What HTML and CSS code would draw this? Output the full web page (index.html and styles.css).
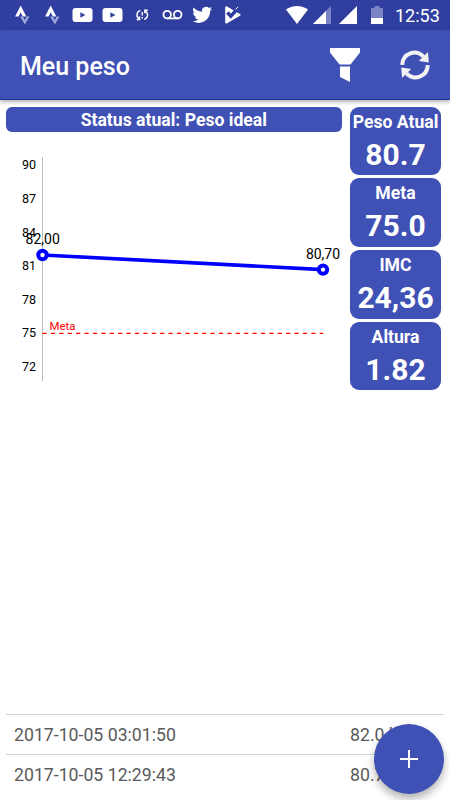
FILE: index.html
```html
<!DOCTYPE html>
<html lang="pt-BR">
<head>
    <meta charset="UTF-8">
    <meta name="viewport" content="width=device-width, initial-scale=1.0">
    <title>Meu peso</title>
    <link rel="stylesheet" href="styles.css">
</head>
<body>
    <div class="status-bar">
        <div class="notifications">
            <svg viewBox="0 0 30 30"><path fill="#fff" d="M13.7 5.6l5.6 11h-3.5l-2.1-4.1-2.1 4.1H8.1z"/><path fill="#9fa8da" d="M13.1 16.6h2.7l2.1 3.4 1.8-3.4h2.8L17.9 24.4z"/></svg>
            <svg viewBox="0 0 30 30"><path fill="#fff" d="M13.7 5.6l5.6 11h-3.5l-2.1-4.1-2.1 4.1H8.1z"/><path fill="#9fa8da" d="M13.1 16.6h2.7l2.1 3.4 1.8-3.4h2.8L17.9 24.4z"/></svg>
            <svg viewBox="0 0 30 30"><rect x="5.5" y="8" width="20" height="14" rx="3" fill="#fff"/><path fill="#303f9f" d="M13.4 12.2v5.6l5-2.8z"/></svg>
            <svg viewBox="0 0 30 30"><rect x="5.5" y="8" width="20" height="14" rx="3" fill="#fff"/><path fill="#303f9f" d="M13.4 12.2v5.6l5-2.8z"/></svg>
            <svg viewBox="0 0 30 30" fill="none" stroke="#fff" stroke-width="1.4"><path d="M13.4 10.4c-3.8 1.2-4.6 6-1.6 8.4M9.6 19.6h3v-3M17.2 19.4c3.8-1.2 4.4-6 1.4-8.2M20.8 10.2h-3v3M15.3 12v3.6M15.3 17v1.5"/></svg>
            <svg viewBox="0 0 30 30" fill="none" stroke="#fff" stroke-width="1.8"><circle cx="10.2" cy="14.6" r="3.8"/><circle cx="20.7" cy="14.6" r="3.8"/><path d="M10.2 18.4h10.5"/></svg>
            <svg viewBox="0 0 30 30"><path fill="#fff" transform="translate(5.3 4.9) scale(.83)" d="M23.95 4.57a10 10 0 0 1-2.82.77 4.96 4.96 0 0 0 2.16-2.72c-.95.55-2 .95-3.13 1.18a4.92 4.92 0 0 0-8.38 4.48C7.69 8.1 4.07 6.13 1.64 3.16a4.92 4.92 0 0 0 1.52 6.57 4.9 4.9 0 0 1-2.23-.61v.06a4.92 4.92 0 0 0 3.95 4.83 5 5 0 0 1-2.21.08 4.94 4.94 0 0 0 4.6 3.42A9.87 9.87 0 0 1 0 19.54a14 14 0 0 0 7.55 2.21c9.05 0 14-7.5 14-13.98 0-.21 0-.42-.02-.63a9.94 9.94 0 0 0 2.42-2.57z"/></svg>
            <svg viewBox="0 0 30 30"><path fill="#fff" d="M8.2 7.2c0-1 1-1.2 1.8-.7l13 7.4c.8.5.8 1.3 0 1.8l-13 7.6c-1 .5-1.8.2-1.8-.7z"/><path fill="none" stroke="#303f9f" stroke-width="3.6" d="M10.4 12.6l3.4 3.6L21.6 7.6"/><path fill="none" stroke="#fff" stroke-width="1" d="M18.6 9.4l2.6-2.6"/></svg>
        </div>
        <div class="system">
            <svg class="wifi" viewBox="0 0 22 18"><path fill="#fff" d="M0 3.6C6.4-1.2 15.6-1.2 22 3.6L11 18z"/></svg>
            <svg class="signal" viewBox="0 0 18 18"><path fill="#7983c5" d="M18 0v18H0z"/><path fill="#fff" d="M13 5v13H0z"/></svg>
            <svg class="signal" viewBox="0 0 18 18"><path fill="#fff" d="M18 0v18H0z"/></svg>
            <svg class="battery" viewBox="0 0 12 18"><path fill="#7983c5" d="M3.5 0h5v2H12v10H0V2h3.5z"/><path fill="#fff" d="M0 12h12v6H0z"/></svg>
            <span class="clock">12:53</span>
        </div>
    </div>

    <header class="app-bar">
        <h1>Meu peso</h1>
        <svg class="filter" viewBox="0 0 30 34"><path fill="#fff" d="M0 0h30v4.5L20.5 16.5h-11L0 4.5zM10 18.5h10V34l-10-5z"/></svg>
        <svg class="refresh" viewBox="0 0 30 30"><g fill="none" stroke="#f2f2f2" stroke-width="4"><path d="M2.2 14.8C2.8 3 16-1.2 23.5 6.6"/><path d="M27.8 15.2C27.2 27 14 31.2 6.5 23.4"/></g><path fill="#f2f2f2" d="M28 2l.8 10.4-10-1.4zM2 28l-.8-10.4 10 1.4z"/></svg>
    </header>

    <main>
        <section class="summary">
            <div class="chart-column">
                <div class="status">Status atual: Peso ideal</div>
                <svg class="chart" viewBox="0 0 336 250">
                    <path class="axis" d="M36.5 17v224"/>
                    <g class="scale">
                        <text x="30" y="29.3">90</text>
                        <text x="30" y="62.9">87</text>
                        <text x="30" y="96.5">84</text>
                        <text x="30" y="130.1">81</text>
                        <text x="30" y="163.7">78</text>
                        <text x="30" y="197.3">75</text>
                        <text x="30" y="230.9">72</text>
                    </g>
                    <path class="goal" d="M36.5 193.4H317"/>
                    <text class="goal-label" x="43.5" y="190.3">Meta</text>
                    <path class="weight" d="M36.5 115L317 129.6"/>
                    <circle class="point" cx="36.5" cy="115" r="4.2"/>
                    <circle class="point" cx="317" cy="129.6" r="4.2"/>
                    <text class="value" x="36.7" y="104.3">82,00</text>
                    <text class="value" x="317" y="119">80,70</text>
                </svg>
            </div>
            <div class="cards">
                <div class="card"><span>Peso Atual</span><strong>80.7</strong></div>
                <div class="card"><span>Meta</span><strong>75.0</strong></div>
                <div class="card"><span>IMC</span><strong>24,36</strong></div>
                <div class="card"><span>Altura</span><strong>1.82</strong></div>
            </div>
        </section>

        <ul class="history">
            <li><span>2017-10-05 03:01:50</span><span class="kg">82.0 kg</span></li>
            <li><span>2017-10-05 12:29:43</span><span class="kg">80.7 kg</span></li>
        </ul>
    </main>

    <button class="fab" aria-label="Adicionar">
        <svg viewBox="0 0 18 18"><path stroke="#fff" stroke-width="2" d="M9 0v18M0 9h18"/></svg>
    </button>
</body>
</html>
```
FILE: styles.css
```css
* {
    box-sizing: border-box;
}
body {
    margin: 0;
    height: 800px;
    display: flex;
    flex-direction: column;
    overflow: hidden;
    background: #fff;
    font-family: Roboto, sans-serif;
}
svg {
    display: block;
    flex: none;
}
.status-bar {
    height: 30px;
    flex: none;
    display: flex;
    justify-content: space-between;
    padding: 0 10px 0 7px;
    background: #303f9f;
}
.notifications {
    display: flex;
}
.notifications svg {
    width: 30px;
    height: 30px;
}
.system {
    display: flex;
    align-items: center;
}
.wifi {
    width: 22px;
    height: 18px;
    margin-right: 5px;
}
.signal {
    width: 18px;
    height: 18px;
    margin-right: 8px;
}
.battery {
    width: 12px;
    height: 18px;
    margin: 0 12px 0 6px;
}
.clock {
    width: 45px;
    color: #fff;
    font-size: 18px;
    line-height: 31px;
    white-space: nowrap;
}
.app-bar {
    height: 70px;
    flex: none;
    display: flex;
    align-items: center;
    padding: 0 20px;
    background: #3f51b5;
    border-bottom: 1px solid #1a33a3;
    box-shadow: 0 2px 4px rgba(0, 0, 0, 0.3);
}
.app-bar h1 {
    flex: 1;
    margin: 0;
    padding-top: 3px;
    color: #fff;
    font-size: 25px;
    font-weight: 500;
}
.filter {
    width: 30px;
    height: 34px;
    margin-right: 40px;
}
.refresh {
    width: 30px;
    height: 30px;
}
main {
    flex: 1;
    display: flex;
    flex-direction: column;
    justify-content: space-between;
    padding: 6.5px 6px 0;
}
.summary {
    display: flex;
    gap: 8.5px;
}
.chart-column {
    width: 335.5px;
}
.status {
    height: 25.5px;
    border-radius: 6px;
    background: #3f51b5;
    color: #fff;
    font-size: 17.6px;
    font-weight: bold;
    line-height: 27px;
    text-align: center;
}
.chart {
    width: 336px;
    height: 250px;
    margin-top: 8px;
}
.axis {
    stroke: #bdbdbd;
}
.scale {
    font-size: 12.5px;
    text-anchor: end;
}
.goal {
    stroke: #f00;
    stroke-width: 1.3;
    stroke-dasharray: 4.2;
}
.goal-label {
    fill: #f00;
    font-size: 11.4px;
}
.weight {
    stroke: #00f;
    stroke-width: 3.6;
}
.point {
    fill: #fff;
    stroke: #00f;
    stroke-width: 4;
}
.value {
    font-size: 14px;
    text-anchor: middle;
}
.cards {
    width: 91px;
    display: flex;
    flex-direction: column;
    gap: 3px;
}
.card {
    height: 68.7px;
    display: flex;
    flex-direction: column;
    align-items: center;
    border-radius: 9px;
    background: #3f51b5;
    color: #fff;
    white-space: nowrap;
}
.card span {
    font-size: 17.6px;
    font-weight: bold;
    line-height: 30px;
}
.card strong {
    font-size: 30px;
    line-height: 36px;
}
.history {
    margin: 0;
    padding: 0;
    list-style: none;
}
.history li {
    height: 40px;
    display: flex;
    padding-left: 8px;
    border-top: 1px solid #d4d4d4;
    color: #5a5a5a;
    font-size: 17.7px;
    line-height: 40px;
}
.history li span:first-child {
    width: 336px;
}
.history li:last-child {
    height: 46px;
}
.fab {
    position: absolute;
    left: 374px;
    top: 724px;
    width: 70px;
    height: 70px;
    display: flex;
    align-items: center;
    justify-content: center;
    padding: 0;
    border: none;
    border-radius: 50%;
    background: #3f51b5;
    box-shadow: 0 5px 9px rgba(0, 0, 0, 0.3);
}
.fab svg {
    width: 18px;
    height: 18px;
}
```
